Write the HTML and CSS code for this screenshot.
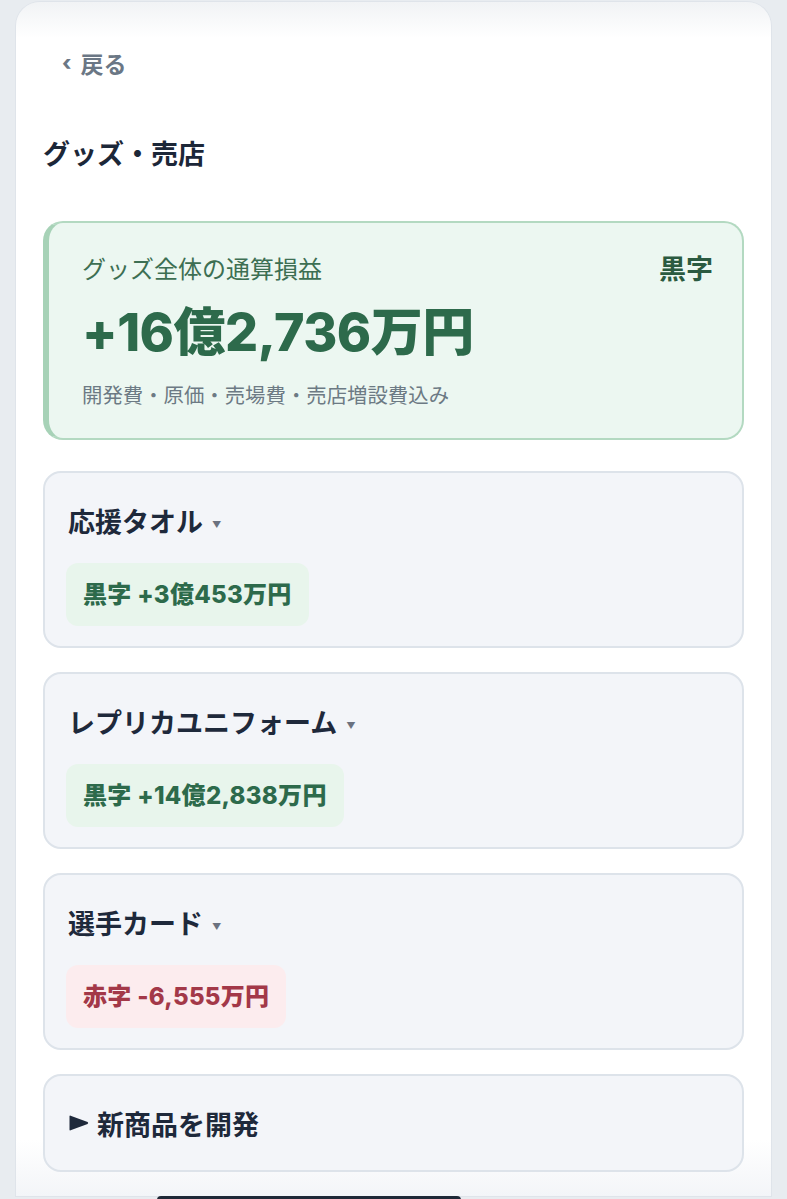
FILE: index.html
```html
<!DOCTYPE html>
<html lang="ja">
<head>
    <meta charset="UTF-8">
    <title>グッズ・売店</title>
    <link rel="stylesheet" href="styles.css">
</head>
<body>
<div id="screen">
    <a class="back" href="#"><span class="back_arrow">‹</span>戻る</a>

    <h1 class="page_title">グッズ・売店</h1>

    <div class="total">
        <div class="total_head">
            <span class="total_label">グッズ全体の通算損益</span>
            <span class="total_state">黒字</span>
        </div>
        <div class="total_amount">+16億2,736万円</div>
        <div class="total_note">開発費・原価・売場費・売店増設費込み</div>
    </div>

    <ul class="goods">
        <li class="goods_item">
            <div class="goods_name">応援タオル<span class="caret">▼</span></div>
            <span class="pl pl_plus">黒字 +3億453万円</span>
        </li>
        <li class="goods_item">
            <div class="goods_name">レプリカユニフォーム<span class="caret">▼</span></div>
            <span class="pl pl_plus">黒字 +14億2,838万円</span>
        </li>
        <li class="goods_item">
            <div class="goods_name">選手カード<span class="caret">▼</span></div>
            <span class="pl pl_minus">赤字 -6,555万円</span>
        </li>
        <li class="goods_item goods_new">
            <div class="goods_name">
                <svg class="marker" width="20" height="16" viewBox="0 0 20 16">
                    <path d="M1.6 0.7 L18.6 7.1 Q19.8 8 18.6 8.9 L1.6 15.3 Q0.5 15.7 0.5 14.5 L0.5 1.5 Q0.5 0.3 1.6 0.7 Z" fill="#1e293b"/>
                </svg>新商品を開発
            </div>
        </li>
    </ul>
</div>
<div id="dock">
    <span class="dock_bar"></span>
</div>
</body>
</html>
```

FILE: styles.css
```css
* {
    margin: 0;
    padding: 0;
    list-style: none;
    box-sizing: border-box;
}

body {
    background: #e8ecf0;
    padding-top: 2px;
    font-family: Inter, "Noto Sans CJK JP", sans-serif;
    color: #1e293b;
}

#screen {
    margin: 0 16px;
    padding: 43px 27px 24px;
    border-radius: 24px 24px 0 0;
    background: linear-gradient(#f1f3f5, #fff 36px, #fff calc(100% - 56px), #f3f5f8);
    box-shadow: 0 0 0 1px #dfe4ea;
}

/* 戻る */
.back {
    display: inline-flex;
    align-items: center;
    padding-left: 19px;
    height: 35px;
    font-size: 23px;
    font-weight: 700;
    color: #6b7785;
    text-decoration: none;
}

.back_arrow {
    font-size: 21px;
    font-weight: 800;
    margin-right: 9px;
    position: relative;
    top: 0;
}

.page_title {
    margin-top: 56px;
    font-size: 27px;
    line-height: 38px;
    font-weight: 700;
    color: #1c2738;
}

/* 通算損益 */
.total {
    margin-top: 47px;
    padding: 28px 29px 29px 33px;
    border: 2px solid #b3d9c1;
    border-left: 6px solid #a7d2b7;
    border-radius: 20px;
    background: #ecf7f1;
}

.total_head {
    display: flex;
    justify-content: space-between;
    align-items: center;
    height: 32px;
}

.total_label {
    font-size: 24px;
    color: #3d6f53;
}

.total_state {
    font-size: 27px;
    font-weight: 700;
    color: #2b5a40;
}

.total_amount {
    margin-top: 22px;
    font-size: 52px;
    line-height: 56px;
    font-weight: 800;
    color: #2d6a4b;
    letter-spacing: -0.5px;
}

.total_note {
    margin-top: 22px;
    font-size: 20.4px;
    line-height: 26px;
    color: #6c7a84;
}

/* 商品リスト */
.goods {
    margin-top: 31px;
    display: flex;
    flex-direction: column;
    gap: 24px;
}

.goods_item {
    padding: 20px 23px;
    border: 2px solid #dde3ea;
    border-radius: 18px;
    background: #f3f5f9;
}

.goods_name {
    display: flex;
    align-items: center;
    height: 54px;
    font-size: 27px;
    font-weight: 700;
    color: #1e293b;
}

.caret {
    margin-left: 9px;
    margin-top: 8px;
    font-size: 9px;
    color: #6b7280;
}

.marker {
    margin-left: 1px;
    margin-right: 8px;
}

.pl {
    display: inline-block;
    margin: 16px 0 0 -2px;
    padding: 0 17px 0 17px;
    height: 63px;
    line-height: 63px;
    border-radius: 12px;
    font-size: 24px;
    font-weight: 800;
    letter-spacing: 0.3px;
}

.pl_plus {
    background: #e8f5ec;
    color: #2d6a4b;
}

.pl_minus {
    background: #fcecee;
    color: #a33848;
}

#dock {
    height: 10px;
    padding-left: 157px;
}

.dock_bar {
    display: block;
    width: 304px;
    height: 8px;
    border-radius: 4px 4px 0 0;
    background: #1f2937;
}
```
